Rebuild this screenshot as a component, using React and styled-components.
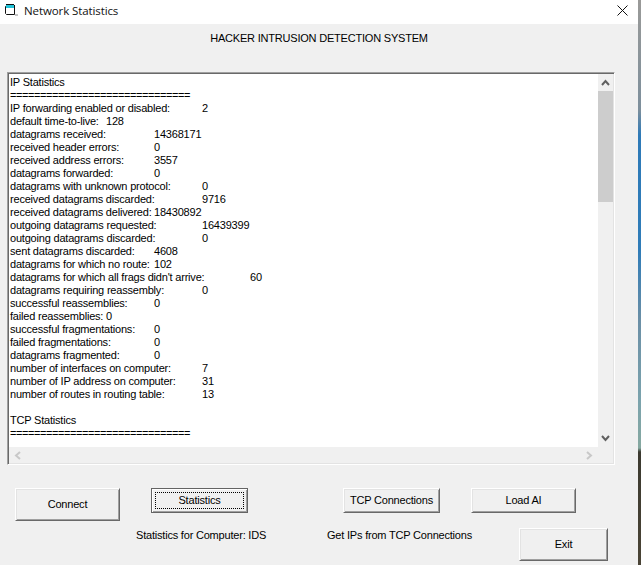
import React from "react";
import styled, { createGlobalStyle } from "styled-components";

const Global = createGlobalStyle`
  html, body { margin: 0; padding: 0; background: #f0f0f0; }
  * { box-sizing: border-box; }
`;

const Screen = styled.div`
  width: 641px;
  height: 565px;
  display: flex;
  overflow: hidden;
  font-family: "Liberation Sans", Arial, sans-serif;
  font-size: 11px;
  letter-spacing: -0.2px;
  color: #000;
`;

const Wallpaper = styled.div`
  width: 3px;
  flex: none;
  background: linear-gradient(
    180deg,
    #9a9a98 0,
    #7d8f9c 110px,
    #2e7ab8 135px,
    #2f7cb8 250px,
    #6b8fa6 320px,
    #7ba3ad 400px,
    #86a8a0 448px,
    #3c3a30 452px,
    #4a4436 565px
  );
`;

const Win = styled.div`
  width: 638px;
  flex: none;
  display: flex;
  flex-direction: column;
  background: #f0f0f0;
`;

const TitleBar = styled.div`
  height: 24px;
  flex: none;
  background: #fff;
  display: flex;
  align-items: center;
  padding: 0 10px 3px 4px;
`;

const TitleIcon = styled.svg`
  display: block;
  flex: none;
`;

const TitleText = styled.span`
  margin-left: 6px;
  margin-top: -1px;
  font-family: "Open Sans", "Noto Sans", sans-serif;
  font-size: 11.5px;
  letter-spacing: -0.1px;
  color: #111;
`;

const CloseIcon = styled.svg`
  margin-left: auto;
  display: block;
`;

const Heading = styled.div`
  height: 48px;
  padding: 7px 0 0 0;
  text-align: center;
  line-height: 14px;
`;

const TextBox = styled.div`
  margin-left: 7px;
  width: 608px;
  height: 393px;
  flex: none;
  border: 1px solid;
  border-color: #a0a0a0 #fff #fff #a0a0a0;
  box-shadow: inset 1px 1px 0 #696969, inset -1px -1px 0 #e3e3e3;
  padding: 1px;
  display: grid;
  grid-template-columns: 1fr 15px;
  grid-template-rows: 1fr 16px;
  background: #f0f0f0;
`;

const Output = styled.div`
  padding: 2px 0 0 1px;
  background: #fff;
  overflow: hidden;
`;

const Line = styled.div`
  height: 13px;
  line-height: 13px;
  white-space: pre;
  tab-size: 48px;
  letter-spacing: ${(p) => (p.$rule ? "-0.42px" : "inherit")};
`;

const VBar = styled.div`
  display: flex;
  flex-direction: column;
  background: #f0f0f0;
`;

const ArrowCell = styled.div`
  height: 17px;
  flex: none;
  display: flex;
  align-items: center;
  justify-content: center;
`;

const Thumb = styled.div`
  height: 111px;
  flex: none;
  background: #cdcdcd;
`;

const Spacer = styled.div`
  flex: 1;
`;

const HBar = styled.div`
  display: flex;
  justify-content: space-between;
  align-items: center;
  background: #f0f0f0;
`;

const HArrow = styled.div`
  width: 17px;
  display: flex;
  justify-content: center;
  align-items: center;
`;

const ButtonRow = styled.div`
  display: flex;
  align-items: flex-start;
  margin-top: 23px;
  padding-left: 15px;
  height: 33px;
`;

const CaptionRow = styled.div`
  display: flex;
  align-items: flex-start;
  margin-top: 7px;
  height: 33px;
`;

const Caption = styled.span`
  width: ${(p) => p.$w}px;
  flex: none;
  margin-left: ${(p) => p.$ml || 0}px;
  line-height: 14px;
  white-space: nowrap;
`;

const Btn = styled.button`
  width: ${(p) => p.$w}px;
  height: ${(p) => p.$h}px;
  margin-left: ${(p) => p.$ml || 0}px;
  flex: none;
  padding: ${(p) => (p.$focused ? "3px" : "0 0 2px 0")};
  font: inherit;
  letter-spacing: inherit;
  color: #000;
  background: #f0f0f0;
  border: 1px solid;
  border-color: ${(p) =>
    p.$focused ? "#646464" : "#fff #696969 #696969 #fff"};
  box-shadow: ${(p) =>
    p.$focused
      ? "inset 1px 1px 0 #fff, inset -1px -1px 0 #a0a0a0"
      : "inset 1px 1px 0 #e3e3e3, inset -1px -1px 0 #a0a0a0"};
  display: flex;
  align-items: stretch;
  justify-content: center;
`;

const BtnLabel = styled.span`
  flex: 1;
  display: flex;
  align-items: center;
  justify-content: center;
  padding-bottom: ${(p) => (p.$focused ? "1px" : "0")};
  border: ${(p) => (p.$focused ? "1px dotted #000" : "0")};
`;

const Chevron = ({ d, color }) => (
  <svg width="9" height="7" viewBox="0 0 9 7" style={{ display: "block" }}>
    <path d={d} fill="none" stroke={color} strokeWidth="2" />
  </svg>
);

const SideChevron = ({ d, color }) => (
  <svg width="7" height="9" viewBox="0 0 7 9" style={{ display: "block" }}>
    <path d={d} fill="none" stroke={color} strokeWidth="2" />
  </svg>
);

const RULE = "==============================";

const lines = [
  "IP Statistics",
  RULE,
  "IP forwarding enabled or disabled:\t2",
  "default time-to-live:\t128",
  "datagrams received:\t14368171",
  "received header errors:\t0",
  "received address errors:\t3557",
  "datagrams forwarded:\t0",
  "datagrams with unknown protocol:\t0",
  "received datagrams discarded:\t9716",
  "received datagrams delivered:\t18430892",
  "outgoing datagrams requested:\t16439399",
  "outgoing datagrams discarded:\t0",
  "sent datagrams discarded:\t4608",
  "datagrams for which no route:\t102",
  "datagrams for which all frags didn't arrive:\t60",
  "datagrams requiring reassembly:\t0",
  "successful reassemblies:\t0",
  "failed reassemblies:\t0",
  "successful fragmentations:\t0",
  "failed fragmentations:\t0",
  "datagrams fragmented:\t0",
  "number of interfaces on computer:\t7",
  "number of IP address on computer:\t31",
  "number of routes in routing table:\t13",
  "",
  "TCP Statistics",
  RULE,
];

export default function App() {
  return (
    <Screen>
      <Global />
      <Win>
        <TitleBar>
          <TitleIcon width="14" height="13" viewBox="0 0 14 13">
            <path d="M1.5 2.5h9v8h-8l-1-1z" fill="#fff" stroke="#111" />
            <rect x="2" y="1" width="8" height="3" fill="#22c3d8" />
            <path d="M2 .5h8M10.5 1v3" stroke="#111" />
            <path d="M11 11h3" stroke="#888" />
          </TitleIcon>
          <TitleText>Network Statistics</TitleText>
          <CloseIcon width="11" height="11" viewBox="0 0 11 11">
            <path d="M.5.5l10 10M10.5.5l-10 10" stroke="#111" strokeWidth="1" />
          </CloseIcon>
        </TitleBar>
        <Heading>HACKER INTRUSION DETECTION SYSTEM</Heading>
        <TextBox>
          <Output>
            {lines.map((text, i) => (
              <Line key={i} $rule={text === RULE}>{text}</Line>
            ))}
          </Output>
          <VBar>
            <ArrowCell>
              <Chevron d="M1 6l3.5-4L8 6" color="#606060" />
            </ArrowCell>
            <Thumb />
            <Spacer />
            <ArrowCell>
              <Chevron d="M1 1l3.5 4L8 1" color="#606060" />
            </ArrowCell>
          </VBar>
          <HBar>
            <HArrow>
              <SideChevron d="M6 1L2 4.5 6 8" color="#c8c8c8" />
            </HArrow>
            <HArrow>
              <SideChevron d="M1 1l4 3.5L1 8" color="#c8c8c8" />
            </HArrow>
          </HBar>
        </TextBox>
        <ButtonRow>
          <Btn $w={105} $h={33}>
            <BtnLabel>Connect</BtnLabel>
          </Btn>
          <Btn $w={97} $h={25} $ml={31} $focused>
            <BtnLabel $focused>Statistics</BtnLabel>
          </Btn>
          <Btn $w={97} $h={25} $ml={95}>
            <BtnLabel>TCP Connections</BtnLabel>
          </Btn>
          <Btn $w={105} $h={25} $ml={31}>
            <BtnLabel>Load AI</BtnLabel>
          </Btn>
        </ButtonRow>
        <CaptionRow>
          <Caption $ml={136} $w={191}>Statistics for Computer: IDS</Caption>
          <Caption $w={192}>Get IPs from TCP Connections</Caption>
          <Btn $w={89} $h={33}>
            <BtnLabel>Exit</BtnLabel>
          </Btn>
        </CaptionRow>
      </Win>
      <Wallpaper />
    </Screen>
  );
}
